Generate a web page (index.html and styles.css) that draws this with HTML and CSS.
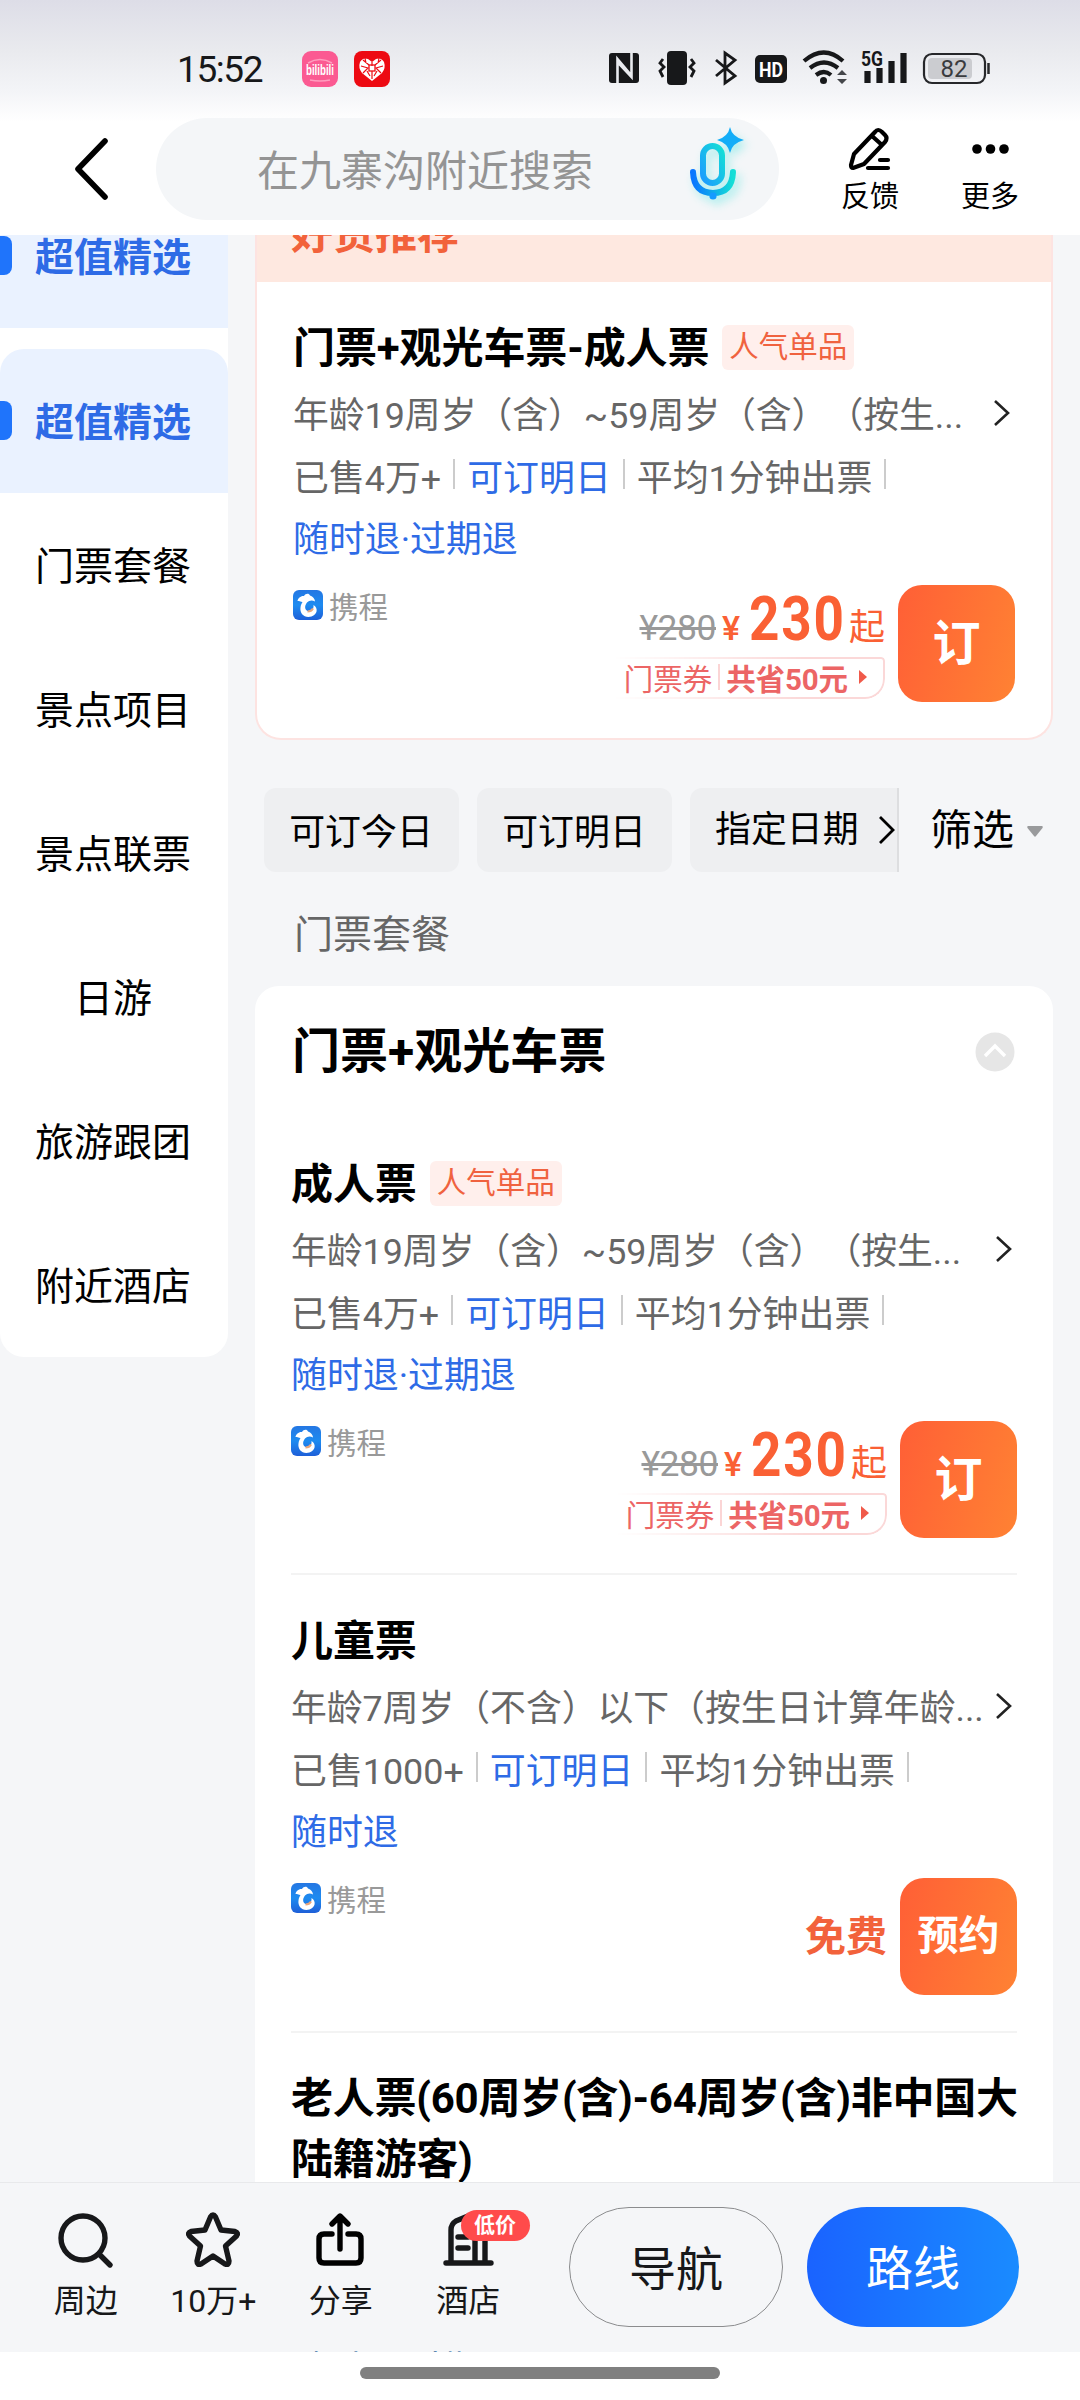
FILE: index.html
```html
<!DOCTYPE html>
<html lang="zh-CN">
<head>
<meta charset="utf-8">
<title>门票预订</title>
<link rel="stylesheet" href="styles.css">
</head>
<body>
<svg width="0" height="0" class="defs" aria-hidden="true">
  <defs>
    <linearGradient id="trip-bg" x1="0" y1="0" x2="0" y2="1"><stop offset="0" stop-color="#2577e3"/><stop offset=".5" stop-color="#1d8bf0"/><stop offset="1" stop-color="#1e5fd8"/></linearGradient>
    <linearGradient id="mic-a" x1="0" y1="1" x2="1" y2="0"><stop offset="0" stop-color="#1c9bff"/><stop offset="1" stop-color="#14dfd6"/></linearGradient>
    <linearGradient id="mic-b" x1="0" y1="0" x2="1" y2="0"><stop offset="0" stop-color="#0a76ff"/><stop offset="1" stop-color="#14dfd6"/></linearGradient>
    <symbol id="trip" viewBox="0 0 30 30">
      <rect width="30" height="30" rx="6" fill="url(#trip-bg)"/>
      <path d="M4.500 11C5 8 8 5.500 11 6C12.500 3.500 16 3 17 5.500C20 6.500 22 9 22 11.500C19 9.500 16 10.500 14 12.500C11.500 15.500 11.500 19.500 14.500 21C18 22.500 21 19.500 20.500 15C25.500 18 24.500 24.500 18.500 26.500C11.500 28.500 6.500 23.500 7.500 17.500C7.800 15 8.500 13.500 9.500 12C7.500 11.500 6 11 4.500 11Z" fill="#fff"/>
      <path d="M14.500 21.500Q18.500 21.500 20 18.500" stroke="#e9a67c" stroke-width="2" fill="none"/>
    </symbol>
    <symbol id="chev" viewBox="0 0 18 28"><path d="M2 2L15 14L2 26" fill="none" stroke="#222" stroke-width="2.600"/></symbol>
  </defs>
</svg>
<div class="screen">
  <header class="top">
    <div class="status">
      <span class="clock">15:52</span>
      <svg class="app" width="36" height="36" viewBox="0 0 36 36"><rect width="36" height="36" rx="9" fill="#fb5a92"/><path d="M6 12Q18 5 30 12M8 29Q18 31 28 29" stroke="#ff9dbf" stroke-width="1.500" fill="none"/><text x="18" y="24" text-anchor="middle" class="app-name" textLength="28" lengthAdjust="spacingAndGlyphs">bilibili</text></svg>
      <svg class="app" width="36" height="36" viewBox="0 0 36 36"><rect width="36" height="36" rx="8" fill="#ed0a12"/><path d="M18 30L8 22Q4 17 6 11Q9 6 14 8L18 11L22 8Q27 6 30 11Q32 17 28 22Z" fill="#fff"/><path d="M9 9L15 14M7 15L14 17L9 22M27 9L21 14M29 15L22 17L27 22M18 11V15M18 20V28M13 20L16 25M23 20L20 25M11 7L12 12M25 7L24 12" stroke="#ed0a12" stroke-width="1.200" fill="none"/><rect x="15" y="14" width="6" height="6" fill="none" stroke="#ed0a12" stroke-width="1.300"/></svg>
      <svg class="sys" width="384" height="38" viewBox="608 49 384 38">
        <rect x="609" y="53" width="30" height="30" rx="3" fill="#17181a"/>
        <path d="M617.500 83V59L631 75M631.500 53V77L617.500 62" fill="none" stroke="#e9ebef" stroke-width="2.600"/>
        <rect x="667" y="51" width="20" height="34" rx="4" fill="#17181a"/>
        <path d="M663 59L660 63L664 67L660 71L663 77M691 59L694 63L690 67L694 71L691 77" fill="none" stroke="#17181a" stroke-width="2.800"/>
        <path d="M716 60L735 76L725 83V53L735 60L716 76" fill="none" stroke="#17181a" stroke-width="2.800"/>
        <rect x="755" y="55" width="32" height="28" rx="5" fill="#17181a"/>
        <text x="771" y="77" class="hd" text-anchor="middle" textLength="24" lengthAdjust="spacingAndGlyphs">HD</text>
        <path d="M804 61Q824 44 843 61M810 68Q824 57 838 68M816 75Q824 69 831 75" fill="none" stroke="#17181a" stroke-width="4.200"/>
        <circle cx="823.500" cy="80.500" r="3.500" fill="#17181a"/>
        <path d="M837 75L842 70L847 75ZM837 79L842 84L847 79Z" fill="#44464a"/>
        <text x="861" y="66" class="net" textLength="22" lengthAdjust="spacingAndGlyphs">5G</text>
        <path d="M867.500 71V83M879.500 68V83M891.500 61V83M903.500 53V83" stroke="#17181a" stroke-width="6.200"/>
        <rect x="924" y="54" width="61" height="29" rx="8" fill="none" stroke="#26272a" stroke-width="2.200"/>
        <rect x="928" y="58" width="44" height="21" rx="4" fill="#cbccd0"/>
        <path d="M988.500 63V74" stroke="#26272a" stroke-width="2.500"/>
        <text x="954" y="77" class="bat" text-anchor="middle">82</text>
      </svg>
    </div>
    <div class="nav">
      <svg class="back" width="36" height="64" viewBox="0 0 36 64"><path d="M32 4L5 32L32 60" fill="none" stroke="#000" stroke-width="5.600" stroke-linecap="round" stroke-linejoin="round"/></svg>
      <div class="search">
        <span>在九寨沟附近搜索</span>
        <svg class="mic" width="60" height="76" viewBox="0 0 60 76">
          <rect x="14" y="19" width="19" height="37" rx="9.500" fill="none" stroke="url(#mic-a)" stroke-width="6"/>
          <path d="M4 45Q5 66 24 66Q43 66 44 45" fill="none" stroke="url(#mic-b)" stroke-width="6" stroke-linecap="round"/>
          <circle cx="24" cy="69" r="3.600" fill="#159bff"/>
          <path d="M41 0Q43 10 55 13Q43 16 41 26Q39 16 28 13Q39 10 41 0Z" fill="#12adf8"/>
        </svg>
      </div>
      <div class="tool">
        <svg width="44" height="44" viewBox="0 0 44 44"><path d="M27 5Q30 1 34 5L37 8Q40 11 37 15L16 37L5 41Q3 41 3 38L6 27ZM24 9L34 18" fill="none" stroke="#000" stroke-width="4.200" stroke-linejoin="round"/><path d="M32 33H40M20 41H40" stroke="#000" stroke-width="4.200" stroke-linecap="round"/></svg>
        <span>反馈</span>
      </div>
      <div class="tool">
        <svg width="44" height="44" viewBox="0 0 44 44"><circle cx="9" cy="22" r="4.800"/><circle cx="22.500" cy="22" r="4.800"/><circle cx="36" cy="22" r="4.800"/></svg>
        <span>更多</span>
      </div>
    </div>
  </header>

  <main class="body">
    <nav class="side">
      <div class="side-item on first">超值精选</div>
      <div class="side-item on">超值精选</div>
      <div class="side-item">门票套餐</div>
      <div class="side-item">景点项目</div>
      <div class="side-item">景点联票</div>
      <div class="side-item">日游</div>
      <div class="side-item">旅游跟团</div>
      <div class="side-item">附近酒店</div>
    </nav>
    <div class="content">
      <section class="card promo">
        <div class="promo-head"><span>好货推荐</span></div>
        <article class="ticket">
          <h3>门票+观光车票-成人票<em>人气单品</em></h3>
          <div class="desc"><span>年龄19周岁（含）~59周岁（含）（按生...</span><svg width="18" height="28"><use href="#chev"/></svg></div>
          <div class="facts"><span>已售4万+</span><i></i><span class="blue">可订明日</span><i></i><span>平均1分钟出票</span><i></i></div>
          <div class="refund">随时退·过期退</div>
          <div class="buy">
            <div class="seller"><svg width="30" height="30"><use href="#trip"/></svg>携程</div>
            <div class="price"><div class="amount"><s>¥280</s><small>¥</small><b>230</b><u>起</u></div><div class="coupon"><span>门票券</span><i></i><strong>共省50元</strong><svg width="8" height="14" viewBox="0 0 8 14"><path d="M0 0L8 7L0 14Z" fill="#f05a4a"/></svg></div></div>
            <div class="btn">订</div>
          </div>
        </article>
      </section>

      <div class="filters">
        <div class="chips"><div class="chip">可订今日</div><div class="chip">可订明日</div><div class="chip cut">指定日期<svg width="18" height="30" viewBox="0 0 18 30"><path d="M2 2L15 15L2 28" fill="none" stroke="#000" stroke-width="2.800"/></svg></div></div>
        <div class="pick">筛选<svg width="16" height="11" viewBox="0 0 16 11"><path d="M1 0H15Q16.500 .5 15.500 2L9 10Q8 11.500 7 10L.5 2Q-.5 .5 1 0Z" fill="#999a9c"/></svg></div>
      </div>
      <div class="group">门票套餐</div>

      <section class="card list">
        <div class="list-head"><h2>门票+观光车票</h2><svg width="40" height="40" viewBox="0 0 40 40"><circle cx="20" cy="20" r="19.500" fill="#e6e6e6"/><path d="M10 24L20 14L30 24" fill="none" stroke="#fff" stroke-width="3.400"/></svg></div>
        <article class="ticket">
          <h3>成人票<em>人气单品</em></h3>
          <div class="desc"><span>年龄19周岁（含）~59周岁（含）（按生...</span><svg width="18" height="28"><use href="#chev"/></svg></div>
          <div class="facts"><span>已售4万+</span><i></i><span class="blue">可订明日</span><i></i><span>平均1分钟出票</span><i></i></div>
          <div class="refund">随时退·过期退</div>
          <div class="buy">
            <div class="seller"><svg width="30" height="30"><use href="#trip"/></svg>携程</div>
            <div class="price"><div class="amount"><s>¥280</s><small>¥</small><b>230</b><u>起</u></div><div class="coupon"><span>门票券</span><i></i><strong>共省50元</strong><svg width="8" height="14" viewBox="0 0 8 14"><path d="M0 0L8 7L0 14Z" fill="#f05a4a"/></svg></div></div>
            <div class="btn">订</div>
          </div>
        </article>
        <article class="ticket">
          <h3>儿童票</h3>
          <div class="desc"><span>年龄7周岁（不含）以下（按生日计算年龄...</span><svg width="18" height="28"><use href="#chev"/></svg></div>
          <div class="facts"><span>已售1000+</span><i></i><span class="blue">可订明日</span><i></i><span>平均1分钟出票</span><i></i></div>
          <div class="refund">随时退</div>
          <div class="buy">
            <div class="seller"><svg width="30" height="30"><use href="#trip"/></svg>携程</div>
            <div class="free">免费</div>
            <div class="btn two">预约</div>
          </div>
        </article>
        <article class="ticket">
          <h3 class="long">老人票(60周岁(含)-64周岁(含)非中国大<br>陆籍游客)</h3>
        </article>
      </section>
    </div>
  </main>

  <footer class="bar">
    <div class="act"><svg width="56" height="56" viewBox="0 0 56 56"><circle cx="25" cy="26" r="22"/><path d="M41 42L52 53"/></svg><span>周边</span></div>
    <div class="act"><svg width="56" height="56" viewBox="0 0 56 56"><path d="M25.500 5Q28 1 30.500 5L36 18L50 19.500Q54 21 51.500 24L40.500 34L44 49Q44 53.500 40 52L28 44L16 52Q12 53.500 12 49L15.500 34L4.500 24Q2 21 6 19.500L20 18Z"/></svg><span>10万+</span></div>
    <div class="act"><svg width="56" height="56" viewBox="0 0 56 56"><path d="M19 22H11Q6 22 6 27V46Q6 51 11 51H43Q48 51 48 46V27Q48 22 43 22H35M27 37V5M19 12L27 4L35 12" stroke="#000"/></svg><span>分享</span></div>
    <div class="act"><svg width="56" height="56" viewBox="0 0 56 56"><path d="M6 51H51M11 51V18Q11 12 16 9L28 4L35 9V51M45 51V20M18 25H28M18 36H28"/></svg><span>酒店</span><b class="badge">低价</b></div>
    <div class="go line">导航</div>
    <div class="go solid">路线</div>
    <div class="under">随时退·过期退</div>
  </footer>
  <div class="home"><i></i></div>
</div>
</body>
</html>
```
FILE: styles.css
```css
* { box-sizing: border-box; margin: 0; padding: 0; }
body { font-family: Roboto, "Noto Sans CJK SC", sans-serif; color: #000; background: #fff; text-spacing-trim: space-all; }
svg { display: block; flex: none; overflow: visible; }
i, em, u { font-style: normal; text-decoration: none; }
.defs { position: absolute; }
.screen { width: 1080px; height: 2400px; display: flex; flex-direction: column; overflow: hidden; background: #f5f6f8; white-space: nowrap; }

.top { height: 235px; flex: none; background: linear-gradient(#dddde7 0, #e9eaee 50px, #f3f4f7 90px, #fff 122px); }
.status { height: 118px; padding: 51px 0 0 177px; display: flex; align-items: flex-start; }
.clock { width: 125px; font-size: 37px; line-height: 37px; letter-spacing: -1.4px; color: #17181a; }
.app { margin-right: 16px; }
.app-name { font: 700 14px "Liberation Sans", sans-serif; fill: #fff; }
.sys { margin: -2px 0 0 202px; }
.hd { font: 700 20px Roboto, sans-serif; fill: #fff; }
.net { font: 700 21px Roboto, sans-serif; fill: #17181a; }
.bat { font: 400 24px Roboto, sans-serif; fill: #3a3b3e; }
.nav { display: flex; align-items: flex-start; padding-left: 73px; }
.back { margin-top: 19px; }
.search { width: 623px; height: 102px; margin-left: 47px; padding: 0 30px 0 101px; display: flex; align-items: center; justify-content: space-between; border-radius: 51px; background: #f4f6f8; color: #949494; font-size: 42px; }
.search span { margin-top: -4px; }
.mic { margin-top: -8px; filter: drop-shadow(4px 5px 5px rgba(20, 223, 214, .35)); }
.tool { width: 60px; margin: 9px 0 0 61px; display: flex; flex-direction: column; align-items: center; font-size: 29px; line-height: 52px; }
.tool + .tool { margin-left: 60px; }

.body { height: 1947px; flex: none; display: flex; align-items: flex-start; overflow: hidden; }
.side { width: 228px; flex: none; background: #fff; border-radius: 0 0 24px 24px; overflow: hidden; }
.side-item { height: 144px; display: flex; align-items: center; justify-content: center; font-size: 39px; padding: 0 2px 4px 0; }
.side-item.on { position: relative; color: #2e6be6; background: #eaf2ff; font-weight: 700; border-radius: 24px 24px 0 0; }
.side-item.on::before { content: ""; position: absolute; left: 0; top: 52px; width: 12px; height: 39px; border-radius: 0 8px 8px 0; background: #1f74fb; }
.side-item.first { margin: -51px 0 21px; }

.content { width: 798px; margin-left: 27px; }
.card { background: #fff; }
.promo { height: 505px; border: 2px solid #fde3e1; border-top: 0; border-radius: 0 0 26px 26px; }
.promo-head { height: 47px; padding-left: 34px; background: #fee8e0; color: #f2623b; font-size: 42px; font-weight: 700; line-height: 42px; overflow: hidden; }
.promo-head span { display: block; margin-top: -21px; }
.ticket { margin: 0 36px; }
.promo .ticket { margin: 32px 36px 0; }
.ticket h3 { height: 60px; display: flex; align-items: center; font-size: 42px; font-weight: 700; letter-spacing: -.1px; }
.ticket em { height: 45px; margin: 6px 0 0 13px; padding: 0 7px; border-radius: 6px; background: #ffefec; color: #f0623f; font-size: 29.5px; line-height: 44px; font-weight: 400; letter-spacing: 0; }
.desc { height: 76px; display: flex; align-items: center; justify-content: space-between; padding-right: 4px; font-size: 35.8px; color: #666; }
.desc svg { margin-top: 2px; }
.facts { height: 50px; display: flex; align-items: center; font-size: 35.9px; color: #666; }
.facts i { width: 2px; height: 30px; margin: -2px 12px 0; background: #ccc; }
.facts .blue, .refund { color: #2e6be6; }
.refund { height: 77px; padding-top: 3px; font-size: 35.9px; line-height: 74px; }
.buy { display: flex; align-items: flex-start; padding-top: 8px; }
.seller { display: flex; align-items: center; gap: 6px; margin: 6px auto 0 0; height: 28px; font-size: 29.5px; color: #999; }
.btn { width: 117px; height: 117px; margin-left: 13px; border-radius: 24px; background: linear-gradient(105deg, #ff5f36, #ff8233); color: #fff; font-size: 48px; font-weight: 700; line-height: 117px; text-align: center; }
.btn.two { font-size: 41px; }
.free { color: #f2623b; font-size: 41px; font-weight: 700; line-height: 119px; }
.price { display: flex; flex-direction: column; align-items: flex-end; color: #fa6034; }
.amount { height: 73px; display: flex; align-items: baseline; line-height: 69px; }
.amount s { color: #999; font-size: 35.5px; letter-spacing: -.5px; }
.amount small { font-size: 34px; font-weight: 500; width: 20px; margin: 0 7px 0 6px; }
.amount b { display: inline-block; width: 98px; font-size: 61px; font-weight: 700; letter-spacing: 2px; transform: scaleX(.87); transform-origin: 0 50%; }
.amount u { font-size: 36px; margin-left: 2px; }
.coupon { position: relative; height: 42px; display: flex; align-items: center; padding: 0 18px 4px 11px; font-size: 29.5px; color: #ec6565; }
.coupon::before { content: ""; position: absolute; inset: -1px 0 1px; border: 2px solid #fbd8d8; border-left: 0; border-radius: 0 4px 20px 0; mask-image: linear-gradient(90deg, transparent, #000 70%); }
.coupon i { width: 2px; height: 26px; margin: 0 6px; background: #fbd5d5; }
.coupon strong { font-weight: 700; letter-spacing: -.1px; margin-right: 11px; }

.filters { margin: 48px 0 0 9px; height: 84px; display: flex; }
.chips { width: 635px; display: flex; gap: 18px; overflow: hidden; border-right: 2px solid #dddee0; }
.chip { width: 195px; flex: none; border-radius: 12px; background: #eeeff1; font-size: 35.9px; line-height: 90px; text-align: center; padding-right: 1px; height: 84px; }
.chip.cut { width: 230px; padding-left: 25px; display: flex; align-items: center; gap: 19px; text-align: left; }
.pick { display: flex; align-items: center; gap: 13px; margin-left: 31px; font-size: 42px; line-height: 86px; height: 86px; }
.group { height: 114px; padding-left: 39px; font-size: 39px; line-height: 126px; color: #666; }
.list { border-radius: 24px 24px 0 0; }
.list-head { height: 164px; padding: 0 38px 0 37px; display: flex; align-items: flex-start; justify-content: space-between; }
.list-head h2 { font-size: 48px; font-weight: 700; line-height: 132px; }
.list-head svg { margin-top: 46px; }
.list .ticket { height: 425px; border-bottom: 2px solid #f3f3f3; }
.list .ticket + .ticket { padding-top: 32px; height: 458px; }
.ticket .long { display: block; height: auto; margin-top: 3px; line-height: 61px; letter-spacing: -.25px; }

.bar { position: relative; height: 170px; flex: none; display: flex; align-items: flex-start; padding-left: 22px; background: #f5f6f8; border-top: 1px solid #e8e9eb; overflow: hidden; }
.act { position: relative; width: 127.500px; padding-top: 29px; display: flex; flex-direction: column; align-items: center; font-size: 32px; line-height: 67px; color: #17181a; }
.act svg { fill: none; stroke: #17181a; stroke-width: 5.400; stroke-linecap: round; stroke-linejoin: round; }
.badge { position: absolute; left: 56px; top: 27px; width: 69px; height: 31px; border-radius: 16px; background: #ff4b4b; color: #fff; font-size: 21px; font-weight: 700; line-height: 30px; text-align: center; }
.go { width: 214px; height: 120px; margin-top: 24px; border-radius: 60px; font-size: 47px; line-height: 124px; text-align: center; }
.line { margin-left: 37px; border: 1px solid #8b8c8e; color: #17181a; }
.solid { width: 212px; margin-left: 24px; background: linear-gradient(90deg, #1a63ff, #1a8bff); color: #fff; }
.under { position: absolute; left: 291px; top: 160px; font-size: 35.9px; line-height: 54px; color: #5b86b0; }
.home { flex: 1; padding-top: 15px; background: #fff; }
.home i { display: block; width: 360px; height: 12px; margin: 0 auto; border-radius: 6px; background: #808080; }
```
